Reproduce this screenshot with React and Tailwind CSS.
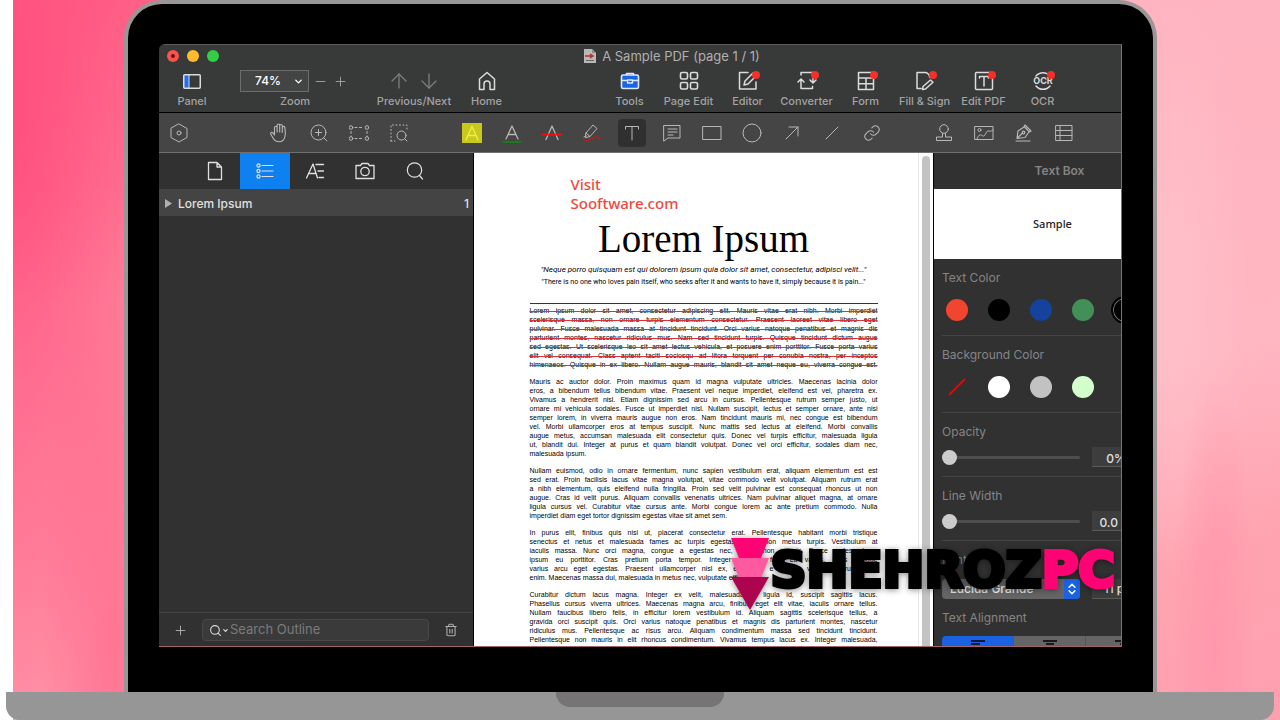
import clsx from 'clsx';
import { Search, Trash2, Plus, Minus, ArrowUp, ArrowDown, ChevronDown, ChevronsUpDown } from 'lucide-react';

const paragraphs = [
  [
    'Lorem ipsum dolor sit amet, consectetur adipiscing elit. Mauris vitae erat nibh. Morbi imperdiet',
    'scelerisque massa, non ornare turpis elementum consectetur. Praesent laoreet vitae libero eget',
    'pulvinar. Fusce malesuada massa at tincidunt tincidunt. Orci varius natoque penatibus et magnis dis',
    'parturient montes, nascetur ridiculus mus. Nam sed tincidunt turpis. Quisque tincidunt dictum augue',
    'sed egestas. Ut scelerisque leo sit amet lectus vehicula, et posuere enim porttitor. Fusce porta varius',
    'elit vel consequat. Class aptent taciti sociosqu ad litora torquent per conubia nostra, per inceptos',
    'himenaeos. Quisque in ex libero. Nullam augue mauris, blandit sit amet neque eu, viverra congue est.',
  ],
  [
    'Mauris ac auctor dolor. Proin maximus quam id magna vulputate ultricies. Maecenas lacinia dolor',
    'eros, a bibendum tellus bibendum vitae. Praesent vel neque imperdiet, eleifend est vel, pharetra ex.',
    'Vivamus a hendrerit nisl. Etiam dignissim sed arcu in cursus. Pellentesque rutrum semper justo, ut',
    'ornare mi vehicula sodales. Fusce ut imperdiet nisl. Nullam suscipit, lectus et semper ornare, ante nisi',
    'semper lorem, in viverra mauris augue non eros. Nam tincidunt mauris mi, nec congue est bibendum',
    'vel. Morbi ullamcorper eros at tempus suscipit. Nunc mattis sed lectus at eleifend. Morbi convallis',
    'augue metus, accumsan malesuada elit consectetur quis. Donec vel turpis efficitur, malesuada ligula',
    'ut, blandit dui. Integer at purus et quam blandit volutpat. Donec vel orci efficitur, sodales diam nec,',
    'malesuada ipsum.',
  ],
  [
    'Nullam euismod, odio in ornare fermentum, nunc sapien vestibulum erat, aliquam elementum est est',
    'sed erat. Proin facilisis lacus vitae magna volutpat, vitae commodo velit volutpat. Aliquam rutrum erat',
    'a nibh elementum, quis eleifend nulla fringilla. Proin sed velit pulvinar est consequat rhoncus ut non',
    'augue. Cras id velit purus. Aliquam convallis venenatis ultrices. Nam pulvinar aliquet magna, at ornare',
    'ligula cursus vel. Curabitur vitae cursus ante. Morbi congue lorem ac ante pretium commodo. Nulla',
    'imperdiet diam eget tortor dignissim egestas vitae sit amet sem.',
  ],
  [
    'In purus elit, finibus quis nisi ut, placerat consectetur erat. Pellentesque habitant morbi tristique',
    'senectus et netus et malesuada fames ac turpis egestas. Nulla non metus turpis. Vestibulum at',
    'iaculis massa. Nunc orci magna, congue a egestas nec, varius non mauris. Fusce malesuada a',
    'ipsum eu porttitor. Cras pretium porta tempor. Integer pulvinar felis eu varius. Cras congue',
    'varius arcu eget egestas. Praesent ullamcorper nisl ex, et mattis e sagittis vel. Ut rutrum justo',
    'enim. Maecenas massa dui, malesuada in metus nec, vulputate efficitur.',
  ],
  [
    'Curabitur dictum lacus magna. Integer ex velit, malesuada ut ligula id, suscipit sagittis lacus.',
    'Phasellus cursus viverra ultrices. Maecenas magna arcu, finibus eget elit vitae, iaculis ornare tellus.',
    'Nullam faucibus libero felis, in efficitur lorem vestibulum id. Aliquam sagittis scelerisque tellus, a',
    'gravida orci suscipit quis. Orci varius natoque penatibus et magnis dis parturient montes, nascetur',
    'ridiculus mus. Pellentesque ac risus arcu. Aliquam condimentum massa sed tincidunt tincidunt.',
    'Pellentesque non mauris in elit rhoncus condimentum. Vivamus tempus lacus ex. Integer malesuada,',
  ],
];

function Icon({ size = 20, width = 1, className, children }) {
  return (
    <svg
      width={size}
      height={size}
      viewBox="0 0 20 20"
      fill="none"
      stroke="currentColor"
      strokeWidth={width}
      strokeLinecap="round"
      strokeLinejoin="round"
      className={className}
      aria-hidden="true"
    >
      {children}
    </svg>
  );
}

const modes = [
  {
    label: 'Tools',
    icon: (
      <Icon width={1.6} className="text-[#dbe8ff]">
        <path d="M6.5 4V2.5h7V4" />
        <rect x="1.5" y="4" width="17" height="13.5" rx="1.5" fill="#1a66e0" />
        <path d="M1.5 9.5h6M12.5 9.5h6M7.5 9v3h5V9z" strokeWidth="1.3" />
      </Icon>
    ),
  },
  {
    label: 'Page Edit',
    icon: (
      <Icon width={1.6}>
        <rect x="1.5" y="1.5" width="7" height="6.5" rx="1.5" />
        <rect x="11.5" y="1.5" width="7" height="6.5" rx="1.5" />
        <rect x="1.5" y="11.5" width="7" height="6.5" rx="1.5" />
        <rect x="11.5" y="11.5" width="7" height="6.5" rx="1.5" />
      </Icon>
    ),
  },
  {
    label: 'Editor',
    dot: true,
    icon: (
      <Icon width={1.5}>
        <path d="M10 1.5H1.5v16.5h16.5V11" />
        <path d="M6 14l1-4 8-8 3 3-8 8z" />
      </Icon>
    ),
  },
  {
    label: 'Converter',
    dot: true,
    icon: (
      <Icon width={1.5}>
        <path d="M1 11l3-3 3 3M4 8v9.5h11.5v-2" />
        <path d="M4 4V1.5h12v9.5M13 9l3 3 3-3" />
      </Icon>
    ),
  },
  {
    label: 'Form',
    dot: true,
    icon: (
      <Icon width={1.5}>
        <path d="M2.5 1.5h15v17h-15zM2.5 7h15M2.5 12.7h15M10 7v11.5" />
      </Icon>
    ),
  },
  {
    label: 'Fill & Sign',
    dot: true,
    icon: (
      <Icon width={1.5}>
        <path d="M6 17.5H2v-16h8q3.5 0 5 5M15.5 9l2.5 2.2-7.5 6.8-3 .5.5-3z" />
      </Icon>
    ),
  },
  {
    label: 'Edit PDF',
    dot: true,
    icon: (
      <Icon width={1.5}>
        <rect x="1.5" y="1.5" width="17" height="17" rx="1" />
        <path d="M5.5 7V5.5h9V7M10 5.5V15" />
      </Icon>
    ),
  },
  {
    label: 'OCR',
    dot: true,
    icon: (
      <Icon width={1.5}>
        <path d="M3 5a9 9 0 0 1 14 0M3 15a9 9 0 0 0 14 0" />
        <text x="10" y="13" textAnchor="middle" fontSize="9" fontWeight="700" fill="currentColor" stroke="none">OCR</text>
      </Icon>
    ),
  },
];

const viewTools = [
  {
    label: 'Hand',
    icon: (
      <Icon width={1.1}>
        <path d="M5.5 12V4.5a1.3 1.3 0 0 1 2.6 0V9M8.1 9V2.3a1.3 1.3 0 0 1 2.6 0V9M10.7 9V2.8a1.3 1.3 0 0 1 2.6 0V9.5M13.3 9.5V4.7a1.3 1.3 0 0 1 2.6 0c.8 5 1.3 14-6 14-4.5 0-5.5-3-8.3-8 0-2 2.5-2 3.9 1.3" />
      </Icon>
    ),
  },
  {
    label: 'Zoom in',
    icon: (
      <Icon>
        <circle cx="9.5" cy="9.5" r="7.5" />
        <path d="M15 15l3 3M9.5 6.5v6M6.5 9.5h6" />
      </Icon>
    ),
  },
  {
    label: 'Select area',
    icon: (
      <Icon>
        <circle cx="2" cy="4.5" r="1.8" />
        <circle cx="18" cy="4.5" r="1.8" />
        <circle cx="2" cy="15.5" r="1.8" />
        <circle cx="18" cy="15.5" r="1.8" />
        <path d="M6 4.5h9M6 15.5h9M2 8.5v5M18 8.5v5" strokeDasharray="2 2.5" />
      </Icon>
    ),
  },
  {
    label: 'Zoom area',
    icon: (
      <Icon>
        <path d="M2 18V2h16v4M2 18h4" strokeDasharray="1 2.5" />
        <circle cx="12.5" cy="12.5" r="4.5" />
        <path d="M16 16l2 2" />
      </Icon>
    ),
  },
];

const markupTools = [
  {
    label: 'Highlight',
    icon: (
      <Icon width={1.3} className="bg-[#c8c81e] text-[#f0f04a]">
        <path d="M4 17L10 3.5 16 17M6.3 12.5h7.4" />
      </Icon>
    ),
  },
  {
    label: 'Underline',
    icon: (
      <Icon width={1.3}>
        <path d="M4 16L10 3l6 13M6.3 11.5h7.4" />
        <path d="M1 19h18" stroke="#1b7a1b" strokeWidth="1.8" />
      </Icon>
    ),
  },
  {
    label: 'Strikethrough',
    icon: (
      <Icon width={1.3}>
        <path d="M4 16.5L10 3l6 13.5" />
        <path d="M.5 11.5h19" stroke="#f01010" strokeWidth="1.8" />
      </Icon>
    ),
  },
  {
    label: 'Freehand',
    icon: (
      <Icon>
        <path d="M4 10l7-8 4 3.5-7 8-4 1zM4 10l4 3.5M2 14l2-1" />
        <path d="M3 17c3 3 5-2 8-2 2 0 1-2 4-2 2 0 1 3 3 3" stroke="#c81a1a" strokeWidth="1.5" strokeDasharray="2 2" />
      </Icon>
    ),
  },
  {
    label: 'Text box',
    active: true,
    icon: (
      <Icon>
        <path d="M3.5 6V3.5h13V6M10 3.5V17" />
      </Icon>
    ),
  },
  {
    label: 'Note',
    icon: (
      <Icon>
        <path d="M2 2.5h16v12.5H6l-4 3zM6 6h9M6 9h9M6 12h5" />
      </Icon>
    ),
  },
  {
    label: 'Rectangle',
    icon: (
      <Icon>
        <rect x="1" y="3.5" width="18" height="13" />
      </Icon>
    ),
  },
  {
    label: 'Oval',
    icon: (
      <Icon>
        <circle cx="10" cy="10" r="9" />
      </Icon>
    ),
  },
  {
    label: 'Arrow',
    icon: (
      <Icon>
        <path d="M4 16L16 4M7 4h9v9" />
      </Icon>
    ),
  },
  {
    label: 'Line',
    icon: (
      <Icon>
        <path d="M4 16L16 4" />
      </Icon>
    ),
  },
  {
    label: 'Link',
    icon: (
      <svg width="18" height="18" viewBox="0 0 24 24" fill="none" stroke="currentColor" strokeWidth="1.4" strokeLinecap="round" aria-hidden="true">
        <path d="M10 13a5 5 0 0 0 7.5.5l3-3a5 5 0 0 0-7-7l-1.7 1.7" />
        <path d="M14 11a5 5 0 0 0-7.5-.5l-3 3a5 5 0 0 0 7 7l1.7-1.7" />
      </svg>
    ),
  },
];

const insertTools = [
  {
    label: 'Stamp',
    icon: (
      <Icon>
        <circle cx="10" cy="6" r="4.3" />
        <path d="M8.5 10.2V14H2.5v3.5h15V14h-6v-3.8" />
      </Icon>
    ),
  },
  {
    label: 'Image',
    icon: (
      <Icon>
        <rect x="1" y="3.5" width="18" height="13" />
        <circle cx="5.5" cy="7" r="1.5" />
        <path d="M3 16c2-6 4-4 6-3s3-5 5-5 2 1 5-1" />
      </Icon>
    ),
  },
  {
    label: 'Signature',
    icon: (
      <Icon width={1.2}>
        <path d="M11 2l6 6-1.5 1L10 3.5zM10 4L4 8 3 15.5l8-1 4-5.5M3.5 15l5-5" />
        <circle cx="9.5" cy="9.5" r="1.3" />
        <path d="M2 18h14" />
      </Icon>
    ),
  },
  {
    label: 'Table',
    icon: (
      <Icon>
        <path d="M2 2.5h16v15H2zM2 7.5h16M2 12.5h16M6 2.5v15" />
      </Icon>
    ),
  },
];

const panelTabs = [
  {
    label: 'Thumbnails',
    icon: (
      <Icon width={1.3}>
        <path d="M3.5 1.5h8.5l4.5 4.5v12.5h-13zM12 1.5V6h4.5" />
      </Icon>
    ),
  },
  {
    label: 'Outline',
    active: true,
    icon: (
      <Icon width={1.2}>
        <circle cx="3.5" cy="4.5" r="1.6" />
        <circle cx="3.5" cy="10" r="1.6" />
        <circle cx="3.5" cy="15.5" r="1.6" />
        <path d="M7 4.5h11M7 10h11M7 15.5h11" />
      </Icon>
    ),
  },
  {
    label: 'Annotations',
    icon: (
      <Icon width={1.3}>
        <path d="M1.5 17L8 3l4.5 14M3.5 12.5h7M11 3.5h7.5M13 10h5.5M14 16.5h4.5" />
      </Icon>
    ),
  },
  {
    label: 'Snapshots',
    icon: (
      <Icon width={1.3}>
        <path d="M1 4.5h4.5L7 2.5h6l1.5 2H19v13H1z" />
        <circle cx="10" cy="10.5" r="4.2" />
      </Icon>
    ),
  },
  {
    label: 'Search',
    icon: (
      <Icon width={1.2}>
        <circle cx="9.5" cy="9" r="7.2" />
        <path d="M14.5 14.5l3 3.5" />
      </Icon>
    ),
  },
];

const textColors = ['bg-[#f24530]', 'bg-black', 'bg-[#14429c]', 'bg-[#438f58]'];
const fillColors = ['bg-white', 'bg-[#c2c2c2]', 'bg-[#d2ffcc]'];

function ModeButton({ item }) {
  return (
    <button className="flex w-[59px] flex-col items-center whitespace-nowrap">
      <span className="relative flex h-[26px] items-center text-[#dcdcdc]">
        {item.icon}
        {item.dot && <span className="absolute top-[3px] -right-0.5 size-2 rounded-full bg-[#f5302a]" />}
      </span>
      <span className="leading-[14px]">{item.label}</span>
    </button>
  );
}

function ToolButton({ item }) {
  return (
    <button aria-label={item.label} className="flex w-10 items-center justify-center">
      <span className={clsx('flex size-7 items-center justify-center rounded', item.active && 'bg-[#303030]')}>
        {item.icon}
      </span>
    </button>
  );
}

function TitleBar() {
  return (
    <div className="grid h-[22px] grid-cols-[1fr_auto_1fr] items-center px-2">
      <div className="flex gap-2">
        <span className="flex size-3 items-center justify-center rounded-full bg-[#f6544d]">
          <span className="size-1 rounded-full bg-[#7a0d08]" />
        </span>
        <span className="size-3 rounded-full bg-[#fdbc2e]" />
        <span className="size-3 rounded-full bg-[#32cf46]" />
      </div>
      <div className="flex items-center gap-1.5 text-[13px] leading-4 text-[#b0b0b0]">
        <svg width="12" height="14" viewBox="0 0 12 14" aria-hidden="true">
          <path d="M0 0h8l4 4v10H0z" fill="#bdb8b8" />
          <path d="M8 0v4h4z" fill="#8d8989" />
          <path d="M1 7h7M6 5l3 2-3 2" fill="none" stroke="#b3302a" strokeWidth="1.5" />
          <path d="M2 11.5h8" stroke="#666" />
        </svg>
        <span>A Sample PDF (page 1 / 1)</span>
      </div>
    </div>
  );
}

function MainToolbar() {
  return (
    <div className="flex border-b border-black pt-px pb-1 text-[11px] font-medium text-[#a3a3a3]">
      <button className="flex w-[66px] flex-col items-center">
        <span className="flex h-[26px] items-center">
          <svg width="18" height="15" viewBox="0 0 18 15" aria-hidden="true">
            <rect x="1" y="1" width="5" height="13" fill="#1f6ff0" />
            <rect x=".75" y=".75" width="16.5" height="13.5" rx="1" fill="none" stroke="#dcdcdc" strokeWidth="1.5" />
            <path d="M6 1v13" stroke="#dcdcdc" />
          </svg>
        </span>
        <span className="leading-[14px]">Panel</span>
      </button>

      <div className="ml-[15px] flex w-[110px] flex-col items-center">
        <div className="flex h-[26px] w-full items-center">
          <div className="relative mr-1">
            <select
              id="zoom"
              className="h-[22px] w-[69px] appearance-none border border-[#6c6c6c] bg-[#434444] pl-3.5 text-[12px] font-medium text-white"
            >
              <option>74%</option>
            </select>
            <ChevronDown size={11} strokeWidth={3} className="pointer-events-none absolute top-[6px] right-[5px] text-white" />
          </div>
          <button aria-label="Zoom out" className="flex w-5 justify-start"><Minus size={15} strokeWidth={1.5} /></button>
          <button aria-label="Zoom in"><Plus size={15} strokeWidth={1.5} /></button>
        </div>
        <label htmlFor="zoom" className="leading-[14px]">Zoom</label>
      </div>

      <div className="ml-[27px] flex w-[74px] flex-col items-center whitespace-nowrap">
        <div className="flex h-[26px] items-center gap-1.5 text-[#7d7d7d]">
          <button aria-label="Previous page"><ArrowUp size={24} strokeWidth={1.3} /></button>
          <button aria-label="Next page"><ArrowDown size={24} strokeWidth={1.3} /></button>
        </div>
        <span className="leading-[14px]">Previous/Next</span>
      </div>

      <div className="ml-[6px]">
        <ModeButton
          item={{
            label: 'Home',
            icon: (
              <Icon width={1.5}>
                <path d="M2.5 8L10 1.5 17.5 8v10.5H13v-5.5a3 3 0 0 0-6 0v5.5H2.5z" />
              </Icon>
            ),
          }}
        />
      </div>

      <div className="ml-[84px] flex">
        {modes.map((item) => <ModeButton key={item.label} item={item} />)}
      </div>
    </div>
  );
}

function MarkupBar() {
  return (
    <div className="flex h-10 border-b border-[#707070] bg-[#454545] text-[#b8b8b8]">
      <ToolButton
        item={{
          label: 'Preferences',
          icon: (
            <Icon>
              <path d="M10 1l8 4.5v9L10 19l-8-4.5v-9z" />
              <circle cx="10" cy="10" r="2" />
            </Icon>
          ),
        }}
      />
      <div className="ml-[60px] flex">
        {viewTools.map((item) => <ToolButton key={item.label} item={item} />)}
      </div>
      <div className="ml-[33px] flex">
        {markupTools.map((item) => <ToolButton key={item.label} item={item} />)}
      </div>
      <div className="ml-8 flex">
        {insertTools.map((item) => <ToolButton key={item.label} item={item} />)}
      </div>
    </div>
  );
}

function OutlinePanel() {
  return (
    <aside className="flex w-[315px] shrink-0 flex-col border-r border-black bg-[#313131] text-[#e0e0e0]">
      <div className="flex h-9 justify-center pr-0.5">
        {panelTabs.map((tab) => (
          <button
            key={tab.label}
            aria-label={tab.label}
            className={clsx('flex w-[50px] items-center justify-center', tab.active && 'bg-[#0f80f0]')}
          >
            {tab.icon}
          </button>
        ))}
      </div>
      <div className="flex h-[27px] items-center bg-[#444444] pt-0.5 pr-1 pl-1.5 text-[12px] font-medium">
        <svg width="7" height="9" viewBox="0 0 7 9" className="mr-1.5 text-[#b0b0b0]" aria-hidden="true">
          <path d="M0 0l7 4.5L0 9z" fill="currentColor" />
        </svg>
        <a href="#page-1" className="flex-1">Lorem Ipsum</a>
        <span>1</span>
      </div>
      <div className="mt-auto flex h-[34px] items-center border-t border-[#454545] pt-px pr-[15px] pl-3.5 text-[#b0b0b0]">
        <button aria-label="Add entry"><Plus size={15} strokeWidth={1.5} /></button>
        <label className="mr-[15px] ml-3.5 flex h-[22px] min-w-0 flex-1 items-center rounded border border-[#484848] bg-[#3a3a3a] pl-1.5 text-[#dcdcdc]">
          <Search size={13} strokeWidth={2} className="shrink-0" />
          <ChevronDown size={7} strokeWidth={4} className="shrink-0" />
          <input
            aria-label="Search Outline"
            placeholder="Search Outline"
            className="min-w-0 flex-1 bg-transparent pl-px text-[13px] outline-none placeholder:text-[#7b7b7b]"
          />
        </label>
        <button aria-label="Delete entry"><Trash2 size={14} strokeWidth={1.8} /></button>
      </div>
    </aside>
  );
}

function Document() {
  return (
    <main className="relative min-w-0 flex-1 overflow-hidden bg-white text-black">
      <article id="page-1" className="mx-auto w-full max-w-[348px] pt-[22px] whitespace-nowrap">
        <p className="ml-[41px] font-['Noto_Sans',sans-serif] text-[15px] leading-[19px] font-medium text-[#f0483c]">
          Visit<br />Sooftware.com
        </p>
        <h1 className="mt-0.5 text-center font-['Liberation_Serif',serif] text-[39px] leading-[48px]">Lorem Ipsum</h1>
        <p className="text-center font-['Roboto',sans-serif] text-[8px] leading-[14px] italic">
          "Neque porro quisquam est qui dolorem ipsum quia dolor sit amet, consectetur, adipisci velit..."
        </p>
        <p className="text-center font-['Roboto',sans-serif] text-[7px] leading-[10px]">
          "There is no one who loves pain itself, who seeks after it and wants to have it, simply because it is pain..."
        </p>
        <hr className="mt-4 mb-0.5 border-[#333]" />
        <div className="flex flex-col gap-2 font-['Liberation_Sans',sans-serif] text-[7px] leading-[9px]">
          {paragraphs.map((lines, p) => (
            <p key={p}>
              {lines.map((line) => (
                <span
                  key={line}
                  className={clsx(
                    'block',
                    line.length > 85 && '[text-align-last:justify]',
                    p === 0 && 'line-through decoration-[#d8323a] decoration-1'
                  )}
                >
                  {line}
                </span>
              ))}
            </p>
          ))}
        </div>
      </article>
      <div className="absolute inset-y-0 right-0 w-[15px] border-l border-[#e8e8e8] bg-white pt-[3px] pl-[3px]">
        <div className="h-full w-2 rounded-t-full bg-[#c3c3c3]" />
      </div>
    </main>
  );
}

function SliderRow({ id, label, value }) {
  return (
    <section className="ml-2 border-b border-[#454545] pt-[11px] pb-[9px]">
      <label htmlFor={id} className="block leading-4">{label}</label>
      <div className="mt-[7px] flex h-5 items-center gap-3">
        <input
          id={id}
          type="range"
          defaultValue="0"
          className="h-[3px] w-[138px] appearance-none rounded bg-[#4d4d4d] [&::-webkit-slider-thumb]:size-[15px] [&::-webkit-slider-thumb]:appearance-none [&::-webkit-slider-thumb]:rounded-full [&::-webkit-slider-thumb]:bg-[#cccccc]"
        />
        <input
          aria-label={`${label} value`}
          defaultValue={value}
          className="h-5 w-12 border-b border-[#5a5a5a] bg-[#3d3d3d] pt-1 text-center text-[12px] font-medium text-[#e0e0e0]"
        />
      </div>
    </section>
  );
}

function Inspector() {
  return (
    <aside className="w-[252px] shrink-0 overflow-hidden border-l border-black bg-[#313131] text-[12px] text-[#858585]">
      <h2 className="flex h-9 items-center justify-center font-semibold">Text Box</h2>
      <div className="bg-white pr-3.5">
        <p className="flex h-[70px] items-center justify-center font-['Noto_Sans',sans-serif] text-[11px] font-medium text-[#222]">Sample</p>
      </div>

      <section className="ml-2 border-b border-[#454545] pt-[11px] pb-3.5">
        <h3 className="leading-4">Text Color</h3>
        <div className="mt-[13px] flex h-[22px] items-center gap-5 pl-1">
          {textColors.map((color) => (
            <button key={color} aria-label="Text color" className={clsx('size-[22px] rounded-full', color)} />
          ))}
          <button aria-label="Custom text color" className="-ml-[3px] size-7 rounded-full border-2 border-black bg-black ring-1 ring-[#777] ring-inset" />
        </div>
      </section>

      <section className="ml-2 border-b border-[#454545] pt-[11px] pb-3.5">
        <h3 className="leading-4">Background Color</h3>
        <div className="mt-[13px] flex h-[22px] items-center gap-5 pl-1">
          <button aria-label="No background">
            <svg width="22" height="22" viewBox="0 0 22 22" aria-hidden="true">
              <path d="M3 19L19 3" stroke="#c81414" strokeWidth="2" />
            </svg>
          </button>
          {fillColors.map((color) => (
            <button key={color} aria-label="Background color" className={clsx('size-[22px] rounded-full', color)} />
          ))}
        </div>
      </section>

      <SliderRow id="opacity" label="Opacity" value="0%" />
      <SliderRow id="line-width" label="Line Width" value="0.0 pt" />

      <section className="ml-2 pt-[11px]">
        <label htmlFor="font" className="block leading-4">Font</label>
        <div className="mt-[11px] flex gap-3">
          <div className="relative">
            <select
              id="font"
              className="h-5 w-[138px] appearance-none rounded bg-[#656565] pl-2 text-[12px] font-medium text-[#e6e6e6]"
            >
              <option>Lucida Grande</option>
            </select>
            <span className="pointer-events-none absolute inset-y-0 right-0 flex w-4 items-center justify-center rounded-r bg-[#1a62e2] text-white">
              <ChevronsUpDown size={14} strokeWidth={2.5} />
            </span>
          </div>
          <input
            aria-label="Font size"
            defaultValue="11 pt"
            className="h-5 w-12 border-b border-[#5a5a5a] bg-[#3d3d3d] text-center text-[12px] font-medium text-[#e0e0e0]"
          />
        </div>
        <h3 className="mt-[11px] leading-4">Text Alignment</h3>
        <div className="mt-2.5 flex text-black">
          {['left', 'center', 'right'].map((side) => (
            <button
              key={side}
              aria-label={`Align ${side}`}
              className={clsx(
                'flex h-5 w-[72px] justify-center border-r border-[#555] pt-1',
                side === 'left' ? 'rounded-l bg-[#1a62e2]' : 'bg-[#656565]'
              )}
            >
              <svg width="14" height="12" viewBox="0 0 14 12" stroke="currentColor" strokeWidth="1.5" aria-hidden="true">
                {side === 'left' && <path d="M0 1h14M0 4h9M0 7h14M0 10h9" />}
                {side === 'center' && <path d="M0 1h14M3 4h8M0 7h14M3 10h8" />}
                {side === 'right' && <path d="M0 1h14M5 4h9M0 7h14M5 10h9" />}
              </svg>
            </button>
          ))}
        </div>
      </section>
    </aside>
  );
}

function Watermark() {
  return (
    <div className="pointer-events-none absolute right-[6px] bottom-[36px] flex h-[72px] items-start gap-0.5 drop-shadow-[0_1px_3px_rgba(0,0,0,0.45)]">
      <svg width="38" height="72" viewBox="0 0 38 72" aria-hidden="true">
        <path d="M0 0h38l-8 20H8z" fill="#ff0273" />
        <path d="M0 20h38l-8 20H8z" fill="#ff5a9f" />
        <path d="M0 39h38L19 72z" fill="#ad0450" />
      </svg>
      <span className="font-['DejaVu_Sans',sans-serif] text-[50px] leading-[64px] font-bold text-black [-webkit-text-stroke:4px_currentColor]">
        SHEHROZ<span className="text-[#ff0273]">PC</span>
      </span>
    </div>
  );
}

export default function App() {
  return (
    <div className="h-screen overflow-hidden bg-white font-['Inter',sans-serif]">
      <div className="relative flex h-full flex-col">
        <div className="absolute inset-y-0 right-0 left-[13px] flex justify-between">
          <div className="w-[164px] bg-[radial-gradient(ellipse_at_0%_15%,#ff4f7f_0,#ff4f7f00_70%),radial-gradient(ellipse_at_60%_88%,#ff7594_0,#ff759400_50%),linear-gradient(180deg,#ff6488_0,#ff7895_25%,#ff92a4_42%,#ff8ba1_75%,#ff90a5_100%)]" />
          <div className="w-[164px] bg-[radial-gradient(ellipse_at_60%_90%,#ff98ab_0,#ff98ab00_30%),radial-gradient(ellipse_at_35%_40%,#ffc0c9_0,#ffc0c900_50%),linear-gradient(165deg,#ffb3c0_0,#ffb7c2_50%,#ffa3b1_75%,#ffa0b0_100%)]" />
        </div>

        <div className="relative mr-[123px] ml-[124px] flex min-h-0 flex-1 flex-col rounded-t-[38px] border-4 border-b-0 border-[#999796] bg-black px-[31px] pt-10 pb-[45px]">
          <div className="relative min-h-0 flex-1 overflow-hidden rounded-tl-md border border-l-0 border-t-[#5c5c5c] border-r-[#a5626c] border-b-[#a5626c]">
            <div className="-mr-16 flex h-full flex-col bg-[#383939]">
              <TitleBar />
              <MainToolbar />
              <MarkupBar />
              <div className="flex min-h-0 flex-1">
                <OutlinePanel />
                <Document />
                <Inspector />
              </div>
            </div>
            <Watermark />
          </div>
        </div>

        <div className="relative mx-1.5 h-7 shrink-0 rounded-b-[14px] bg-[#979696]">
          <div className="mx-auto h-[15px] w-[168px] rounded-b-[14px] bg-[#767474]" />
        </div>
      </div>
    </div>
  );
}
